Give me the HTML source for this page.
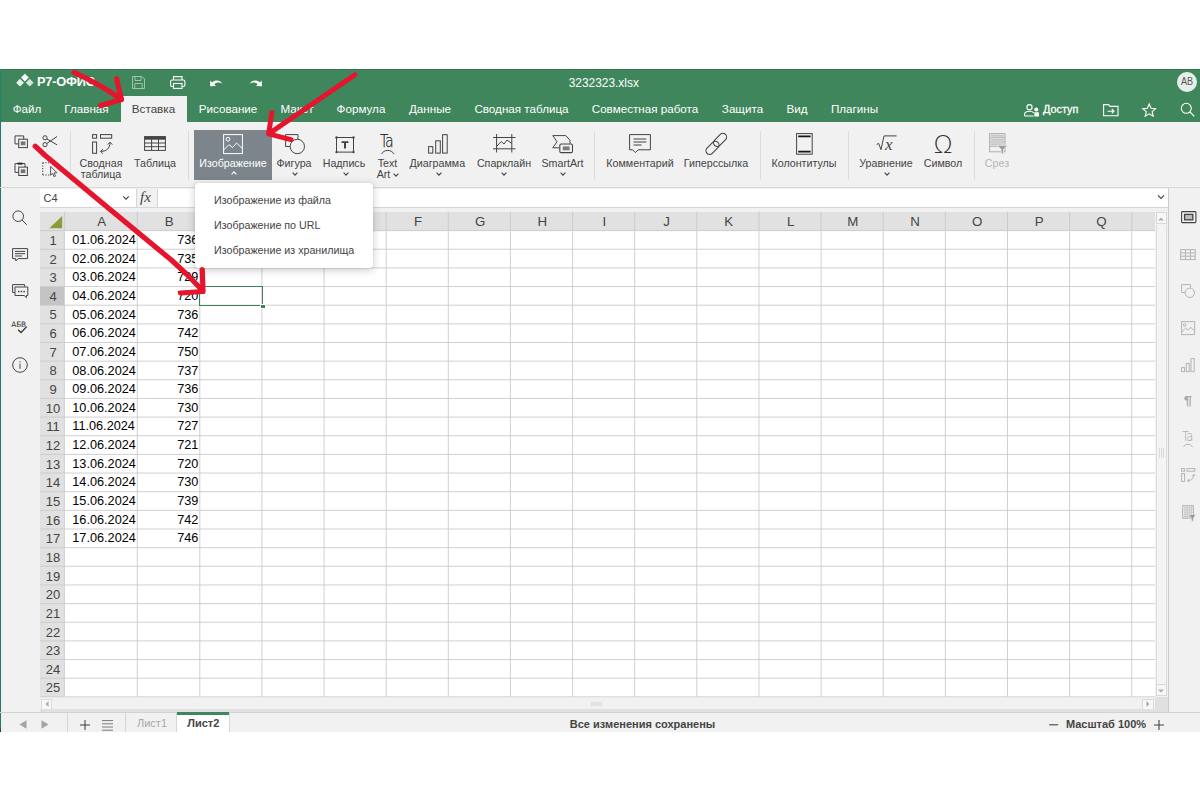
<!DOCTYPE html>
<html lang="ru"><head><meta charset="utf-8"><title>3232323.xlsx</title>
<style>
html,body{margin:0;padding:0}
body{width:1200px;height:800px;background:#fff;position:relative;overflow:hidden;font-family:"Liberation Sans",sans-serif;font-size:11px;color:#444}
.a{position:absolute}
.t{position:absolute;white-space:nowrap;line-height:1}
.tab{position:absolute;top:103.3px;font-size:11.65px;color:#fff;white-space:nowrap;line-height:1;transform:translateX(-50%)}
.lbl{position:absolute;font-size:10.7px;color:#444;white-space:nowrap;line-height:11px;text-align:center;transform:translateX(-50%)}
.sep{position:absolute;top:130.5px;height:49px;width:1px;background:#dcdcdc}
.cell{position:absolute;font-size:12.7px;color:#000;white-space:nowrap;line-height:1}
.rh{position:absolute;font-size:13px;color:#444;white-space:nowrap;line-height:1;transform:translateX(-50%)}
.ch{position:absolute;font-size:13.3px;color:#444;white-space:nowrap;line-height:1;transform:translateX(-50%);top:214.6px}
.mi{position:absolute;left:214px;font-size:10.7px;color:#444;white-space:nowrap;line-height:1}
svg{position:absolute;overflow:visible}
</style></head><body>

<div class="a" style="left:0;top:68.7px;width:1200px;height:53.3px;background:#40865c"></div>
<div class="a" style="left:0;top:122px;width:1200px;height:610px;background:#f1f1f1"></div>
<div class="a" style="left:0;top:68.7px;width:1200px;height:0.9px;background:#35734e"></div>
<div class="a" style="left:0;top:69px;width:2px;height:53px;background:linear-gradient(90deg,#1f806c,#40865c)"></div>
<div class="a" style="left:0;top:122px;width:2.4px;height:610px;background:linear-gradient(90deg,#3a706c 0,#3a706c 1.2px,#def2f2 1.3px,#e9f5f5 2.4px)"></div>
<div class="a" style="left:0;top:727px;width:1.3px;height:5px;background:linear-gradient(180deg,#3a706c,#0f3a35)"></div>
<div class="a" style="left:120.7px;top:96.2px;width:66.3px;height:26px;background:#f1f1f1"></div>
<svg style="left:15px;top:73px" width="20" height="16" viewBox="0 0 20 16">
<path d="M9.9 0.7 L13.8 4.6 L9.9 8.5 L6 4.6 Z" fill="#fff"/>
<path d="M5 5.8 L8.9 9.7 L5 13.6 L1.1 9.7 Z" fill="#e6f1ea"/>
<path d="M14.7 5.8 L18.6 9.7 L14.7 13.6 L10.8 9.7 Z" fill="#d5e6dc"/>
</svg>
<div class="t" style="left:37px;top:75.6px;font-size:12.8px;font-weight:bold;color:#fff;letter-spacing:-0.2px">Р7-ОФИС</div>
<div class="t" style="left:603.8px;top:77.8px;font-size:11.9px;color:#fff;transform:translateX(-50%)">3232323.xlsx</div>
<div class="a" style="left:1177.4px;top:72px;width:19.8px;height:19.8px;border-radius:50%;background:#e6f0ea"></div>
<div class="t" style="left:1187.3px;top:76.2px;font-size:10.8px;color:#555;transform:translateX(-50%) scaleX(0.84)">AB</div>
<div class="tab" style="left:27px">Файл</div>
<div class="tab" style="left:86.5px">Главная</div>
<div class="tab" style="left:228px">Рисование</div>
<div class="tab" style="left:297px">Макет</div>
<div class="tab" style="left:361px">Формула</div>
<div class="tab" style="left:430px">Данные</div>
<div class="tab" style="left:521.5px">Сводная таблица</div>
<div class="tab" style="left:645px">Совместная работа</div>
<div class="tab" style="left:742.5px">Защита</div>
<div class="tab" style="left:797px">Вид</div>
<div class="tab" style="left:854.5px">Плагины</div>
<div class="tab" style="left:153.5px;color:#444">Вставка</div>
<div class="t" style="left:1043px;top:104.3px;font-size:10.9px;color:#fff;-webkit-text-stroke:0.3px #fff">Доступ</div>
<div class="sep" style="left:70px"></div>
<div class="sep" style="left:188px"></div>
<div class="sep" style="left:594px"></div>
<div class="sep" style="left:760px"></div>
<div class="sep" style="left:848px"></div>
<div class="sep" style="left:974px"></div>
<div class="a" style="left:0;top:186.5px;width:1200px;height:1px;background:#d8d8d8"></div>
<div class="a" style="left:194px;top:130px;width:78px;height:50px;background:#7d858c"></div>
<div class="lbl" style="left:101px;top:157.5px;color:#444">Сводная<br>таблица</div>
<div class="lbl" style="left:155px;top:157.5px;color:#444">Таблица</div>
<div class="lbl" style="left:233px;top:157.5px;color:#fff">Изображение</div>
<div class="lbl" style="left:294px;top:157.5px;color:#444">Фигура</div>
<div class="lbl" style="left:344px;top:157.5px;color:#444">Надпись</div>
<div class="lbl" style="left:387.5px;top:157.5px;color:#444">Text<br>Art<span style="display:inline-block;width:8px"></span></div>
<div class="lbl" style="left:437.3px;top:157.5px;color:#444">Диаграмма</div>
<div class="lbl" style="left:504px;top:157.5px;color:#444">Спарклайн</div>
<div class="lbl" style="left:562.5px;top:157.5px;color:#444">SmartArt</div>
<div class="lbl" style="left:640px;top:157.5px;color:#444">Комментарий</div>
<div class="lbl" style="left:716px;top:157.5px;color:#444">Гиперссылка</div>
<div class="lbl" style="left:804px;top:157.5px;color:#444">Колонтитулы</div>
<div class="lbl" style="left:886px;top:157.5px;color:#444">Уравнение</div>
<div class="lbl" style="left:943px;top:157.5px;color:#444">Символ</div>
<div class="lbl" style="left:997px;top:157.5px;color:#b5b5b5">Срез</div>
<svg style="left:230.3px;top:170.3px" width="8" height="6" viewBox="0 0 8 6"><path d="M1.6 4.3 L4 1.9 L6.4 4.3" fill="none" stroke="#fff" stroke-width="1.1"/></svg>
<svg style="left:291.4px;top:171.4px" width="8" height="6" viewBox="0 0 8 6"><path d="M1.6 1.7 L4 4.1 L6.4 1.7" fill="none" stroke="#444" stroke-width="1.1"/></svg>
<svg style="left:341.6px;top:171.4px" width="8" height="6" viewBox="0 0 8 6"><path d="M1.6 1.7 L4 4.1 L6.4 1.7" fill="none" stroke="#444" stroke-width="1.1"/></svg>
<svg style="left:435px;top:171.4px" width="8" height="6" viewBox="0 0 8 6"><path d="M1.6 1.7 L4 4.1 L6.4 1.7" fill="none" stroke="#444" stroke-width="1.1"/></svg>
<svg style="left:500.3px;top:171.4px" width="8" height="6" viewBox="0 0 8 6"><path d="M1.6 1.7 L4 4.1 L6.4 1.7" fill="none" stroke="#444" stroke-width="1.1"/></svg>
<svg style="left:559.3px;top:171.4px" width="8" height="6" viewBox="0 0 8 6"><path d="M1.6 1.7 L4 4.1 L6.4 1.7" fill="none" stroke="#444" stroke-width="1.1"/></svg>
<svg style="left:883.3px;top:171.4px" width="8" height="6" viewBox="0 0 8 6"><path d="M1.6 1.7 L4 4.1 L6.4 1.7" fill="none" stroke="#444" stroke-width="1.1"/></svg>
<svg style="left:392px;top:171.5px" width="8" height="6" viewBox="0 0 8 6"><path d="M1.6 1.7 L4 4.1 L6.4 1.7" fill="none" stroke="#444" stroke-width="1.1"/></svg>
<div class="a" style="left:40px;top:211.5px;width:1115px;height:485.3499999999999px;background:#fff"></div>
<div class="a" style="left:40px;top:211.5px;width:1115px;height:19.099999999999994px;background:#e1e1e1"></div>
<div class="a" style="left:40px;top:230.6px;width:24.400000000000006px;height:466.2499999999999px;background:#e1e1e1"></div>
<div class="a" style="left:199.8px;top:211.5px;width:62.13px;height:19.099999999999994px;background:#cfcfcf"></div>
<div class="a" style="left:40px;top:286.55px;width:24.400000000000006px;height:18.65px;background:#c4c4c4"></div>
<svg style="left:0;top:0" width="1200" height="800" viewBox="0 0 1200 800" shape-rendering="auto"><g stroke="#cbcbcb" stroke-width="0.9"><line x1="64.4" y1="211.5" x2="64.4" y2="696.8"/><line x1="137.3" y1="211.5" x2="137.3" y2="696.8"/><line x1="199.8" y1="211.5" x2="199.8" y2="696.8"/><line x1="261.9" y1="211.5" x2="261.9" y2="696.8"/><line x1="324.1" y1="211.5" x2="324.1" y2="696.8"/><line x1="386.2" y1="211.5" x2="386.2" y2="696.8"/><line x1="448.3" y1="211.5" x2="448.3" y2="696.8"/><line x1="510.4" y1="211.5" x2="510.4" y2="696.8"/><line x1="572.6" y1="211.5" x2="572.6" y2="696.8"/><line x1="634.7" y1="211.5" x2="634.7" y2="696.8"/><line x1="696.8" y1="211.5" x2="696.8" y2="696.8"/><line x1="759.0" y1="211.5" x2="759.0" y2="696.8"/><line x1="821.1" y1="211.5" x2="821.1" y2="696.8"/><line x1="883.2" y1="211.5" x2="883.2" y2="696.8"/><line x1="945.4" y1="211.5" x2="945.4" y2="696.8"/><line x1="1007.5" y1="211.5" x2="1007.5" y2="696.8"/><line x1="1069.6" y1="211.5" x2="1069.6" y2="696.8"/><line x1="1131.8" y1="211.5" x2="1131.8" y2="696.8"/><line x1="40" y1="230.60" x2="1155" y2="230.60"/><line x1="40" y1="249.25" x2="1155" y2="249.25"/><line x1="40" y1="267.90" x2="1155" y2="267.90"/><line x1="40" y1="286.55" x2="1155" y2="286.55"/><line x1="40" y1="305.20" x2="1155" y2="305.20"/><line x1="40" y1="323.85" x2="1155" y2="323.85"/><line x1="40" y1="342.50" x2="1155" y2="342.50"/><line x1="40" y1="361.15" x2="1155" y2="361.15"/><line x1="40" y1="379.80" x2="1155" y2="379.80"/><line x1="40" y1="398.45" x2="1155" y2="398.45"/><line x1="40" y1="417.10" x2="1155" y2="417.10"/><line x1="40" y1="435.75" x2="1155" y2="435.75"/><line x1="40" y1="454.40" x2="1155" y2="454.40"/><line x1="40" y1="473.05" x2="1155" y2="473.05"/><line x1="40" y1="491.70" x2="1155" y2="491.70"/><line x1="40" y1="510.35" x2="1155" y2="510.35"/><line x1="40" y1="529.00" x2="1155" y2="529.00"/><line x1="40" y1="547.65" x2="1155" y2="547.65"/><line x1="40" y1="566.30" x2="1155" y2="566.30"/><line x1="40" y1="584.95" x2="1155" y2="584.95"/><line x1="40" y1="603.60" x2="1155" y2="603.60"/><line x1="40" y1="622.25" x2="1155" y2="622.25"/><line x1="40" y1="640.90" x2="1155" y2="640.90"/><line x1="40" y1="659.55" x2="1155" y2="659.55"/><line x1="40" y1="678.20" x2="1155" y2="678.20"/><line x1="40" y1="696.85" x2="1155" y2="696.85"/></g><path d="M62.2 216 L62.2 228.2 L49.3 228.2 Z" fill="#8f9a3a"/></svg>
<div class="ch" style="left:101.6px">A</div>
<div class="ch" style="left:169.2px">B</div>
<div class="ch" style="left:231.6px">C</div>
<div class="ch" style="left:293.7px">D</div>
<div class="ch" style="left:355.8px">E</div>
<div class="ch" style="left:418.0px">F</div>
<div class="ch" style="left:480.1px">G</div>
<div class="ch" style="left:542.2px">H</div>
<div class="ch" style="left:604.3px">I</div>
<div class="ch" style="left:666.5px">J</div>
<div class="ch" style="left:728.6px">K</div>
<div class="ch" style="left:790.7px">L</div>
<div class="ch" style="left:852.9px">M</div>
<div class="ch" style="left:915.0px">N</div>
<div class="ch" style="left:977.1px">O</div>
<div class="ch" style="left:1039.3px">P</div>
<div class="ch" style="left:1101.4px">Q</div>
<div class="rh" style="left:53px;top:233.8px">1</div>
<div class="cell" style="left:72.3px;top:233.9px">01.06.2024</div>
<div class="cell" style="right:1001.7px;top:233.9px">736</div>
<div class="rh" style="left:53px;top:252.5px">2</div>
<div class="cell" style="left:72.3px;top:252.6px">02.06.2024</div>
<div class="cell" style="right:1001.7px;top:252.6px">735</div>
<div class="rh" style="left:53px;top:271.1px">3</div>
<div class="cell" style="left:72.3px;top:271.2px">03.06.2024</div>
<div class="cell" style="right:1001.7px;top:271.2px">729</div>
<div class="rh" style="left:53px;top:289.8px">4</div>
<div class="cell" style="left:72.3px;top:289.9px">04.06.2024</div>
<div class="cell" style="right:1001.7px;top:289.9px">720</div>
<div class="rh" style="left:53px;top:308.4px">5</div>
<div class="cell" style="left:72.3px;top:308.5px">05.06.2024</div>
<div class="cell" style="right:1001.7px;top:308.5px">736</div>
<div class="rh" style="left:53px;top:327.1px">6</div>
<div class="cell" style="left:72.3px;top:327.2px">06.06.2024</div>
<div class="cell" style="right:1001.7px;top:327.2px">742</div>
<div class="rh" style="left:53px;top:345.7px">7</div>
<div class="cell" style="left:72.3px;top:345.8px">07.06.2024</div>
<div class="cell" style="right:1001.7px;top:345.8px">750</div>
<div class="rh" style="left:53px;top:364.4px">8</div>
<div class="cell" style="left:72.3px;top:364.5px">08.06.2024</div>
<div class="cell" style="right:1001.7px;top:364.5px">737</div>
<div class="rh" style="left:53px;top:383.0px">9</div>
<div class="cell" style="left:72.3px;top:383.1px">09.06.2024</div>
<div class="cell" style="right:1001.7px;top:383.1px">736</div>
<div class="rh" style="left:53px;top:401.7px">10</div>
<div class="cell" style="left:72.3px;top:401.8px">10.06.2024</div>
<div class="cell" style="right:1001.7px;top:401.8px">730</div>
<div class="rh" style="left:53px;top:420.3px">11</div>
<div class="cell" style="left:72.3px;top:420.4px">11.06.2024</div>
<div class="cell" style="right:1001.7px;top:420.4px">727</div>
<div class="rh" style="left:53px;top:439.0px">12</div>
<div class="cell" style="left:72.3px;top:439.1px">12.06.2024</div>
<div class="cell" style="right:1001.7px;top:439.1px">721</div>
<div class="rh" style="left:53px;top:457.6px">13</div>
<div class="cell" style="left:72.3px;top:457.7px">13.06.2024</div>
<div class="cell" style="right:1001.7px;top:457.7px">720</div>
<div class="rh" style="left:53px;top:476.3px">14</div>
<div class="cell" style="left:72.3px;top:476.4px">14.06.2024</div>
<div class="cell" style="right:1001.7px;top:476.4px">730</div>
<div class="rh" style="left:53px;top:494.9px">15</div>
<div class="cell" style="left:72.3px;top:495.0px">15.06.2024</div>
<div class="cell" style="right:1001.7px;top:495.0px">739</div>
<div class="rh" style="left:53px;top:513.6px">16</div>
<div class="cell" style="left:72.3px;top:513.7px">16.06.2024</div>
<div class="cell" style="right:1001.7px;top:513.7px">742</div>
<div class="rh" style="left:53px;top:532.2px">17</div>
<div class="cell" style="left:72.3px;top:532.3px">17.06.2024</div>
<div class="cell" style="right:1001.7px;top:532.3px">746</div>
<div class="rh" style="left:53px;top:550.9px">18</div>
<div class="rh" style="left:53px;top:569.5px">19</div>
<div class="rh" style="left:53px;top:588.2px">20</div>
<div class="rh" style="left:53px;top:606.8px">21</div>
<div class="rh" style="left:53px;top:625.5px">22</div>
<div class="rh" style="left:53px;top:644.1px">23</div>
<div class="rh" style="left:53px;top:662.8px">24</div>
<div class="rh" style="left:53px;top:681.4px">25</div>
<div class="a" style="left:199.3px;top:286.1px;width:61.53px;height:18.049999999999997px;border:1.4px solid #3f7f5a;box-sizing:content-box"></div>
<div class="a" style="left:260.43px;top:303.7px;width:3.5px;height:3.5px;background:#3f7f5a;border:0.7px solid #fff"></div>
<svg style="left:132px;top:75.5px" width="13" height="13" viewBox="0 0 13 13" ><g fill="none" stroke="#fff" stroke-width="1" opacity="0.5"><path d="M0.5 0.5 H10 L12.5 3 V12.5 H0.5 Z"/><path d="M3 0.5 V4.5 H9 V0.5"/><path d="M2.8 12.5 V7.5 H10.2 V12.5"/></g></svg>
<svg style="left:170px;top:75.5px" width="16" height="13" viewBox="0 0 16 13" ><g fill="none" stroke="#fff" stroke-width="1.1"><path d="M3.5 4 V0.6 H12 V4"/><rect x="0.6" y="4" width="14.3" height="6.5" rx="1.5"/><rect x="3.5" y="7.5" width="8.5" height="4.9" fill="#40865c"/></g></svg>
<svg style="left:209px;top:78.5px" width="15" height="9" viewBox="0 0 15 9" ><path d="M1 7.3 L1.3 1.6 L3.2 3.4 C6.5 0.6 11 1 13.6 5 C10.8 2.9 7.3 3 5.2 5.3 L7 7 Z" fill="#fff"/></svg>
<svg style="left:248px;top:78.5px" width="15" height="9" viewBox="0 0 15 9" ><path d="M14 7.3 L13.7 1.6 L11.8 3.4 C8.5 0.6 4 1 1.4 5 C4.2 2.9 7.7 3 9.8 5.3 L8 7 Z" fill="#fff"/></svg>
<svg style="left:1024px;top:103.5px" width="16" height="13" viewBox="0 0 16 13" ><g fill="none" stroke="#fff" stroke-width="1.1"><circle cx="5.5" cy="3.2" r="2.6"/><path d="M0.6 12 V10.5 C0.6 8.3 2.5 7.3 5.5 7.3 C7.5 7.3 9 7.8 9.8 8.8 M0.6 12 H9.5"/></g><circle cx="12.3" cy="5.6" r="2" fill="#fff"/><rect x="10.3" y="8.3" width="4.6" height="4.2" fill="#fff"/></svg>
<svg style="left:1102.5px;top:103.5px" width="16" height="12.5" viewBox="0 0 16 12.5" ><g fill="none" stroke="#fff" stroke-width="1.1"><path d="M0.6 11.8 V0.6 H5.5 L7 2.4 H15 V11.8 Z"/><path d="M4.5 7.2 H11 M8.8 5 L11 7.2 L8.8 9.4"/></g></svg>
<svg style="left:1142px;top:103px" width="14.5" height="14" viewBox="0 0 14.5 14" ><path d="M7.2 1 L9 5.3 L13.6 5.7 L10.1 8.7 L11.2 13.2 L7.2 10.8 L3.2 13.2 L4.3 8.7 L0.8 5.7 L5.4 5.3 Z" fill="none" stroke="#fff" stroke-width="1.1" stroke-linejoin="miter"/></svg>
<svg style="left:1180px;top:102px" width="16" height="16" viewBox="0 0 16 16" ><g fill="none" stroke="#fff" stroke-width="1.1"><circle cx="6.3" cy="6.3" r="5"/><path d="M10 10 L14.3 14.3"/></g></svg>
<svg style="left:13.5px;top:135px" width="15" height="14" viewBox="0 0 15 14" ><g fill="none" stroke="#444" stroke-width="1"><path d="M4.6 8.9 H1 V0.9 H9.7 V4.1"/><rect x="4.7" y="4.2" width="8.7" height="8.4"/></g><rect x="6.8" y="6.6" width="4.5" height="3.7" fill="#8a8a8a"/><path d="M6.8 7.2 H11.3 M6.8 9 H11.3" stroke="#555" stroke-width="0.7"/></svg>
<svg style="left:42px;top:135px" width="16" height="13" viewBox="0 0 16 13" ><g fill="none" stroke="#444" stroke-width="1"><circle cx="3" cy="2.8" r="2.1"/><circle cx="3" cy="9.6" r="2.1"/><path d="M4.8 3.9 L15 9.8 M4.8 8.5 L15 1.5"/></g></svg>
<svg style="left:13.5px;top:161.5px" width="15" height="15" viewBox="0 0 15 15" ><g fill="none" stroke="#444" stroke-width="1"><path d="M4.6 10.4 H1 V1.6 H11 V5"/><path d="M3.6 1.6 H8.4" stroke-width="1.9" stroke="#222"/><rect x="4.7" y="5.1" width="8.7" height="8.4"/></g><rect x="6.8" y="7.5" width="4.5" height="3.7" fill="#8a8a8a"/><path d="M6.8 8.1 H11.3 M6.8 9.9 H11.3" stroke="#555" stroke-width="0.7"/></svg>
<svg style="left:41.5px;top:161.5px" width="16" height="16" viewBox="0 0 16 16" ><path d="M0.7 0.7 H8.4 M0.7 0.7 V13 M0.7 13 H7.6" fill="none" stroke="#444" stroke-width="1.1" stroke-dasharray="1.2 1.5"/><path d="M8.6 4.4 V13.2 L10.6 11.5 L12.1 14.7 L13.5 14.1 L12 11 L14.9 10.7 Z" fill="#f1f1f1" stroke="#444" stroke-width="0.9" stroke-linejoin="round"/></svg>
<svg style="left:92px;top:134px" width="22" height="21" viewBox="0 0 22 21" ><g fill="none" stroke="#444" stroke-width="1"><rect x="0.6" y="0.6" width="4" height="3.6"/><rect x="8.5" y="0.6" width="11.2" height="3.6"/><rect x="0.6" y="8" width="4" height="11.3"/><path d="M8.8 17.4 C14.5 17.6 18 14 18 8.6"/><path d="M10.9 15.2 L8.5 17.4 L10.9 19.6 M15.7 10.6 L18 8.2 L20.3 10.6"/></g></svg>
<svg style="left:143.5px;top:136px" width="22" height="15" viewBox="0 0 22 15" ><g fill="none" stroke="#444" stroke-width="1"><rect x="0.6" y="0.6" width="20.8" height="13.8"/><path d="M0.6 2.2 H21.4" stroke-width="3"/><path d="M0.6 7 H21.4 M0.6 10.7 H21.4 M7.6 3 V14.4 M14.5 3 V14.4"/></g></svg>
<svg style="left:223px;top:133.5px" width="20" height="20.5" viewBox="0 0 20 20.5" ><g fill="none" stroke="#fff" stroke-width="1"><rect x="0.6" y="0.6" width="18.8" height="19"/><circle cx="5" cy="5.2" r="1.9"/><path d="M0.6 16 L6 10.6 L9.5 13.6 L13.5 9 L19.4 14.5"/></g></svg>
<svg style="left:285px;top:133.5px" width="21" height="21" viewBox="0 0 21 21" ><g fill="none" stroke="#444" stroke-width="1"><path d="M6 12.5 H0.6 V0.6 H13 V5.5"/><circle cx="12.3" cy="12.5" r="7.2" fill="#f1f1f1"/></g></svg>
<svg style="left:335px;top:135.5px" width="20" height="18" viewBox="0 0 20 18" ><g fill="none" stroke="#444" stroke-width="1"><rect x="1.5" y="1.5" width="17" height="14.6"/></g><g fill="#444"><circle cx="1.5" cy="1.5" r="1.2"/><circle cx="18.5" cy="1.5" r="1.2"/><circle cx="1.5" cy="16.1" r="1.2"/><circle cx="18.5" cy="16.1" r="1.2"/><path d="M6.6 5.2 H13.4 V7 H11 V12.6 H9 V7 H6.6 Z"/></g></svg>
<div class="t" style="left:379.8px;top:132.5px;font-size:17px;color:#222;-webkit-text-stroke:0.25px #222;letter-spacing:-1px;font-weight:200;font-family:'DejaVu Sans',sans-serif;transform:scaleX(0.8);transform-origin:0 0">Ta</div>
<svg style="left:379.8px;top:147.6px" width="16" height="7" viewBox="0 0 16 7" ><path d="M1.5 6 C4 1.2 11.5 1.2 14 6" fill="none" stroke="#444" stroke-width="1"/></svg>
<svg style="left:428px;top:134px" width="20" height="20" viewBox="0 0 20 20" ><g fill="none" stroke="#444" stroke-width="1"><rect x="0.6" y="12.6" width="4.2" height="6.5"/><rect x="7.7" y="6.8" width="4.6" height="12.3"/><rect x="14.6" y="0.7" width="4.6" height="18.4"/></g></svg>
<svg style="left:492.5px;top:134px" width="23" height="19" viewBox="0 0 23 19" ><g fill="none" stroke="#444" stroke-width="1"><path d="M0 3.5 H22.5 M0 14.8 H22.5 M3.6 0 V18.5 M18.8 0 V18.5"/><path d="M3.6 12.5 L8.2 7.5 L11 10 L14 6 L18.8 9.5"/></g></svg>
<svg style="left:551.5px;top:135px" width="22" height="18.5" viewBox="0 0 22 18.5" ><g fill="none" stroke="#444" stroke-width="1"><path d="M7.6 12.8 H0.8 L5 6.7 L0.8 0.6 H13.8 L18 5.2 V8.6"/><rect x="7.8" y="9" width="12.7" height="8.6" rx="1.4" fill="#f1f1f1" stroke-width="1.1"/></g><rect x="10.8" y="11.4" width="6.8" height="3.9" fill="#7c7c7c"/></svg>
<svg style="left:629px;top:134px" width="22" height="19.5" viewBox="0 0 22 19.5" ><g fill="none" stroke="#444" stroke-width="1"><path d="M0.6 0.6 H21.4 V15.8 H9.2 L6.4 18.6 L3.6 15.8 H0.6 Z" stroke-linejoin="round"/><path d="M4.5 5 H17.4 M4.5 8 H17.4 M4.5 11 H12.6"/></g></svg>
<svg style="left:706px;top:133px" width="22.5" height="22" viewBox="0 0 22.5 22" ><g fill="none" stroke="#444" stroke-width="1.1"><rect x="-3.7" y="-7.7" width="7.4" height="15.4" rx="3.7" transform="translate(14.1 6.9) rotate(45)"/><rect x="-3.7" y="-7.7" width="7.4" height="15.4" rx="3.7" transform="translate(6.5 14.9) rotate(45)"/></g></svg>
<svg style="left:795.7px;top:133px" width="17" height="22" viewBox="0 0 17 22" ><g fill="none" stroke="#444" stroke-width="1"><rect x="0.6" y="0.6" width="15.6" height="20.6"/><path d="M2.2 3.3 H14.6 M2.2 18.6 H14.6" stroke-width="1.7" stroke="#151515"/></g></svg>
<svg style="left:875.5px;top:135px" width="22" height="17" viewBox="0 0 22 17" ><path d="M0.6 9.6 L2.6 8.3 L5 14.6 L8 0.9 H20.6" fill="none" stroke="#444" stroke-width="1"/><text x="9" y="14.5" font-family="Liberation Serif, serif" font-style="italic" font-size="17" fill="#444">x</text></svg>
<div class="t" style="left:943px;top:131.7px;font-size:25px;color:#333;font-weight:200;transform:translateX(-50%);font-family:'DejaVu Sans',sans-serif">&#937;</div>
<svg style="left:988.5px;top:133px" width="19" height="22" viewBox="0 0 19 22" ><g fill="none" stroke="#adadad" stroke-width="1"><rect x="0.6" y="0.6" width="15.4" height="18.2"/><path d="M0.6 4.8 H16 M0.6 9 H16 M0.6 13.2 H16" /><path d="M1.8 2.7 H14.8 M1.8 6.9 H14.8 M1.8 11.1 H14.8" stroke-width="1.9" stroke="#c6c6c6"/></g><path d="M8 12.3 H18.6 L14.5 16.4 V21.7 L12.1 19.9 V16.4 Z" fill="#9c9c9c" stroke="#f1f1f1" stroke-width="0.8"/></svg>
<svg style="left:11px;top:209px" width="18" height="18" viewBox="0 0 18 18" ><g fill="none" stroke="#444" stroke-width="1"><circle cx="7.2" cy="7.2" r="5.3"/><path d="M11 11 L15.8 15.8"/></g></svg>
<svg style="left:11.5px;top:247.5px" width="17" height="14" viewBox="0 0 17 14" ><g fill="none" stroke="#444" stroke-width="1"><path d="M0.6 0.6 H15.6 V10.6 H6.2 L3.8 13 V10.6 H0.6 Z" stroke-linejoin="round"/><path d="M3 3.4 H13.2 M3 5.7 H13.2 M3 8 H10"/></g></svg>
<svg style="left:11.5px;top:284px" width="17" height="14.5" viewBox="0 0 17 14.5" ><g fill="none" stroke="#444" stroke-width="1"><path d="M2.8 8.5 H0.6 V0.6 H12.6 V2.6"/><path d="M3 3 H15.8 V11.5 H14.4 V13.6 L12.2 11.5 H3 Z" stroke-linejoin="round"/></g><g fill="#444"><rect x="6" y="6.8" width="1.5" height="1.5"/><rect x="8.7" y="6.8" width="1.5" height="1.5"/><rect x="11.4" y="6.8" width="1.5" height="1.5"/></g></svg>
<div class="t" style="left:11.3px;top:320.8px;font-size:7.4px;color:#333;letter-spacing:-0.15px;font-family:'DejaVu Sans','Liberation Sans',sans-serif">АБВ</div>
<svg style="left:17px;top:325px" width="11" height="9" viewBox="0 0 11 9" ><path d="M1.2 4.8 L4 7.5 L9.8 1.6" fill="none" stroke="#333" stroke-width="1.3"/></svg>
<svg style="left:11.5px;top:356.5px" width="16" height="16" viewBox="0 0 16 16" ><g fill="none" stroke="#444" stroke-width="1"><circle cx="8" cy="8" r="7.3"/><path d="M8 6.6 V11.8 M8 4.2 V5.4"/></g></svg>
<svg style="left:1180.5px;top:211px" width="15.5" height="12.5" viewBox="0 0 15.5 12.5" ><g fill="none" stroke="#444" stroke-width="1.1"><rect x="0.6" y="0.6" width="14.3" height="11" rx="0.8"/><rect x="3.6" y="3.4" width="8.2" height="5.4" stroke-width="1.3" fill="#bdbdbd"/></g></svg>
<svg style="left:1180.3px;top:248.5px" width="16" height="11.5" viewBox="0 0 16 11.5" ><g fill="none" stroke="#b4b4b4" stroke-width="1"><rect x="0.6" y="0.6" width="14.6" height="10"/><path d="M0.6 3.9 H15.2 M0.6 7.2 H15.2 M5.5 0.6 V10.6 M10.4 0.6 V10.6"/></g></svg>
<svg style="left:1180.5px;top:283.5px" width="15" height="15" viewBox="0 0 15 15" ><g fill="none" stroke="#b4b4b4" stroke-width="1"><path d="M4 8.5 H0.6 V0.6 H9.5 V3.5"/><circle cx="8.8" cy="8.8" r="4.7"/></g></svg>
<svg style="left:1180.5px;top:320.5px" width="14.5" height="14.5" viewBox="0 0 14.5 14.5" ><g fill="none" stroke="#b4b4b4" stroke-width="1"><rect x="0.6" y="0.6" width="13" height="13"/><circle cx="3.7" cy="3.8" r="1.3"/><path d="M0.6 11 L4.6 7.2 L7 9.3 L9.7 6.3 L13.6 10"/></g></svg>
<svg style="left:1180.5px;top:357.5px" width="14.5" height="14.5" viewBox="0 0 14.5 14.5" ><g fill="none" stroke="#b4b4b4" stroke-width="1"><rect x="0.6" y="9.6" width="3" height="4"/><rect x="5.3" y="5.4" width="3" height="8.2"/><rect x="10" y="0.6" width="3.2" height="13"/></g></svg>
<div class="t" style="left:1187.6px;top:394.2px;font-size:13.4px;font-weight:bold;color:#a9a9a9;transform:translateX(-50%) scaleX(1.12);font-family:'Liberation Sans',sans-serif">&#182;</div>
<div class="t" style="left:1181.6px;top:428.7px;font-size:14px;color:#9d9d9d;letter-spacing:-0.9px;font-weight:200;font-family:'DejaVu Sans',sans-serif;transform:scaleX(0.82);transform-origin:0 0">Ta</div>
<svg style="left:1182px;top:441.5px" width="12" height="6" viewBox="0 0 12 6" ><path d="M1.5 5 C3.5 1.3 8.5 1.3 10.5 5" fill="none" stroke="#b4b4b4" stroke-width="1"/></svg>
<svg style="left:1180.5px;top:468px" width="15" height="15" viewBox="0 0 15 15" ><g fill="none" stroke="#b4b4b4" stroke-width="1"><rect x="0.6" y="0.6" width="3" height="2.6"/><rect x="6" y="0.6" width="7.8" height="2.6"/><rect x="0.6" y="5.6" width="3" height="7.8"/><path d="M6.6 12.6 C10.4 12.7 12.8 10.2 12.8 6.6"/><path d="M8.2 11 L6.4 12.6 L8.2 14.2 M11.2 8.2 L12.8 6.4 L14.4 8.2"/></g></svg>
<svg style="left:1181.7px;top:505px" width="15" height="18" viewBox="0 0 15 18" ><g fill="none" stroke="#b4b4b4" stroke-width="1"><rect x="0.6" y="0.6" width="10.8" height="12.6"/></g><g stroke="#c4c4c4" stroke-width="0.9"><path d="M1.6 2.8 H10.6 M1.6 5 H10.6 M1.6 7.2 H10.6 M1.6 9.4 H10.6 M1.6 11.4 H10.6"/><path d="M3 1 V13 M5.2 1 V13 M7.4 1 V13 M9.6 1 V13"/></g><path d="M6.4 9.6 H14.2 L11.3 12.8 V16.8 L9.3 15.4 V12.8 Z" fill="#969696" stroke="#f1f1f1" stroke-width="0.6"/></svg>
<div class="a" style="left:39.8px;top:188.5px;width:96.2px;height:18.7px;background:#fff"></div>
<div class="a" style="left:158px;top:188.5px;width:1010px;height:18.7px;background:#fff"></div>
<div class="a" style="left:136px;top:188.5px;width:1px;height:18.7px;background:#d6d6d6"></div>
<div class="a" style="left:157.3px;top:188.5px;width:1px;height:18.7px;background:#d6d6d6"></div>
<div class="a" style="left:40px;top:207.2px;width:1128px;height:1px;background:#d6d6d6"></div>
<div class="t" style="left:43.5px;top:192.5px;font-size:11px;color:#444">C4</div>
<svg style="left:122px;top:194.5px" width="8" height="6" viewBox="0 0 8 6"><path d="M1.2 1.3 L4 4.1 L6.8 1.3" fill="none" stroke="#444" stroke-width="1.1"/></svg>
<svg style="left:1156.5px;top:194px" width="8" height="6" viewBox="0 0 8 6"><path d="M1 1.3 L4 4.3 L7 1.3" fill="none" stroke="#444" stroke-width="1.2"/></svg>
<div class="t" style="left:140px;top:189.5px;font-size:15px;color:#444;font-family:'Liberation Serif',serif;font-style:italic">fx</div>
<div class="a" style="left:1168px;top:187.5px;width:1px;height:524.5px;background:#cbcbcb"></div>
<div class="a" style="left:1155px;top:211.5px;width:13px;height:485px;background:#f1f1f1"></div>
<div class="a" style="left:1155.5px;top:224.5px;width:11px;height:459px;background:#f4f4f4;border-left:1px solid #dcdcdc;border-right:1px solid #dcdcdc;box-sizing:border-box"></div>
<div class="a" style="left:1155.5px;top:212px;width:11px;height:12px;background:#f7f7f7;border:1px solid #d8d8d8;box-sizing:border-box"></div>
<div class="a" style="left:1155.5px;top:684px;width:11px;height:12px;background:#f7f7f7;border:1px solid #d8d8d8;box-sizing:border-box"></div>
<svg style="left:1157.5px;top:217.3px" width="6" height="4" viewBox="0 0 6 4"><path d="M0 3.6 L3 0.4 L6 3.6 Z" fill="#adadad"/></svg>
<svg style="left:1157.5px;top:688.5px" width="6" height="4" viewBox="0 0 6 4"><path d="M0 0.4 L3 3.6 L6 0.4 Z" fill="#adadad"/></svg>
<div class="a" style="left:1158.5px;top:448px;width:5px;height:10px;background:repeating-linear-gradient(90deg,#dadada 0 1px,transparent 1px 2px)"></div>
<div class="a" style="left:40px;top:696.8px;width:1128px;height:12.4px;background:#f1f1f1"></div>
<div class="a" style="left:40px;top:696.8px;width:1115px;height:1.6px;background:#e9e9e9"></div>
<div class="a" style="left:40px;top:709px;width:1128px;height:3px;background:#e0e0e0"></div>
<div class="a" style="left:40.5px;top:698.6px;width:11.5px;height:10.6px;background:#f8f8f8;border:1px solid #dadada;border-bottom:0;box-sizing:border-box"></div>
<div class="a" style="left:1142px;top:698.6px;width:11.5px;height:10.6px;background:#f8f8f8;border:1px solid #dadada;border-bottom:0;box-sizing:border-box"></div>
<svg style="left:44.5px;top:701px" width="4" height="6" viewBox="0 0 4 6"><path d="M3.6 0 L0.4 3 L3.6 6 Z" fill="#adadad"/></svg>
<svg style="left:1146px;top:701px" width="4" height="6" viewBox="0 0 4 6"><path d="M0.4 0 L3.6 3 L0.4 6 Z" fill="#adadad"/></svg>
<div class="a" style="left:1155px;top:696.8px;width:13px;height:15.2px;background:#e0e0e0"></div>
<div class="a" style="left:591px;top:701.6px;width:10.6px;height:4.6px;background:#e2e2e2"></div>
<div class="a" style="left:194.5px;top:183px;width:178.5px;height:85px;background:#fff;border-radius:3px;box-shadow:0 2px 8px rgba(0,0,0,0.22),0 0 1px rgba(0,0,0,0.25)"></div>
<div class="mi" style="top:194.5px">Изображение из файла</div>
<div class="mi" style="top:219.5px">Изображение по URL</div>
<div class="mi" style="top:245px">Изображение из хранилища</div>
<div class="a" style="left:0;top:711.6px;width:1200px;height:1px;background:#d2d2d2"></div>
<div class="a" style="left:0;top:731.6px;width:1200px;height:69px;background:#fff"></div>
<div class="a" style="left:67px;top:712.5px;width:1px;height:19px;background:#d6d6d6"></div>
<div class="a" style="left:125.3px;top:712.5px;width:1px;height:19px;background:#d6d6d6"></div>
<div class="a" style="left:176.3px;top:712.5px;width:1px;height:19px;background:#d6d6d6"></div>
<div class="a" style="left:177.3px;top:712px;width:52px;height:19.6px;background:#fff"></div>
<div class="a" style="left:177.3px;top:711.6px;width:52px;height:3px;background:#40865c"></div>
<div class="a" style="left:229.3px;top:712.5px;width:1px;height:19px;background:#d6d6d6"></div>
<div class="t" style="left:152px;top:718px;font-size:11px;color:#a8a8a8;transform:translateX(-50%)">Лист1</div>
<div class="t" style="left:203.3px;top:718px;font-size:11px;color:#444;font-weight:bold;transform:translateX(-50%)">Лист2</div>
<div class="t" style="left:642.5px;top:718.5px;font-size:11px;color:#444;font-weight:bold;transform:translateX(-50%)">Все изменения сохранены</div>
<div class="t" style="left:1106px;top:718.5px;font-size:11px;color:#444;font-weight:bold;transform:translateX(-50%)">Масштаб 100%</div>
<svg style="left:18.5px;top:720px" width="8" height="9" viewBox="0 0 8 9"><path d="M7.5 0.3 L0.5 4.5 L7.5 8.7 Z" fill="#a4a4a4"/></svg>
<svg style="left:41px;top:720px" width="8" height="9" viewBox="0 0 8 9"><path d="M0.5 0.3 L7.5 4.5 L0.5 8.7 Z" fill="#a4a4a4"/></svg>
<svg style="left:80.3px;top:719.5px" width="10" height="10" viewBox="0 0 10 10"><path d="M0 5 H10 M5 0 V10" stroke="#3a3a3a" stroke-width="1"/></svg>
<svg style="left:102px;top:719.6px" width="11" height="11" viewBox="0 0 11 11"><path d="M0 0.6 H11 M0 3.8 H11 M0 7 H11 M0 10.2 H11" stroke="#7a7a7a" stroke-width="1"/></svg>
<svg style="left:1049px;top:724px" width="9.4" height="2" viewBox="0 0 9 2"><path d="M0 0.8 H9" stroke="#444" stroke-width="1.1"/></svg>
<svg style="left:1153.5px;top:719.5px" width="10" height="10" viewBox="0 0 10 10"><path d="M0 5 H10 M5 0 V10" stroke="#444" stroke-width="1.1"/></svg>
<svg style="left:0;top:0" width="1200" height="800" viewBox="0 0 1200 800">
<g fill="none" stroke="#e6152e" stroke-linecap="round" stroke-linejoin="round">
<g stroke-width="5.2"><path d="M74 72.4 Q100 84.3 121.3 99.3"/><path d="M116.6 78.7 L121.5 99.6 L100.6 105.6"/></g>
<g stroke-width="5"><path d="M355 74.7 L269 133.6"/><path d="M271.9 112.6 L268.6 133.8 L291 139.6"/></g>
<g stroke-width="5.2"><path d="M35.2 146.2 L44.6 155 L58.1 166.3 L109.2 208.75 L171.3 260 L187 274.5 L202.5 290.5"/><path d="M202.3 269.5 L203 291.5 L180.5 293"/></g>
</g></svg>
</body></html>
